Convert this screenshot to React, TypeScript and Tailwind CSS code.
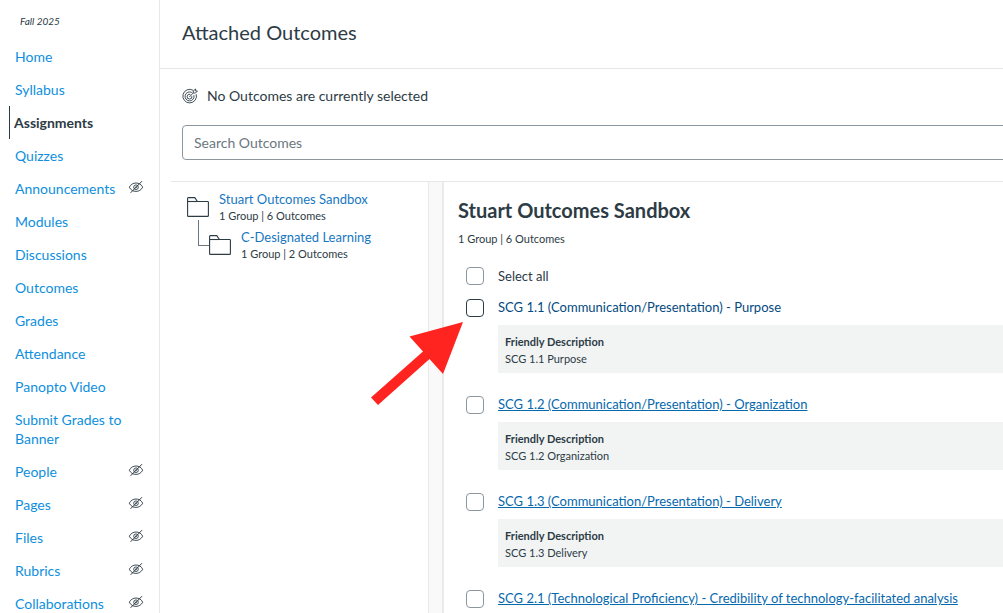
import { useState } from 'react';

interface NavItem {
  label: string;
  hidden?: boolean;
}

interface Outcome {
  title: string;
  description?: string;
}

const NAV_ITEMS: NavItem[] = [
  { label: 'Home' },
  { label: 'Syllabus' },
  { label: 'Assignments' },
  { label: 'Quizzes' },
  { label: 'Announcements', hidden: true },
  { label: 'Modules' },
  { label: 'Discussions' },
  { label: 'Outcomes' },
  { label: 'Grades' },
  { label: 'Attendance' },
  { label: 'Panopto Video' },
  { label: 'Submit Grades to Banner' },
  { label: 'People', hidden: true },
  { label: 'Pages', hidden: true },
  { label: 'Files', hidden: true },
  { label: 'Rubrics', hidden: true },
  { label: 'Collaborations', hidden: true },
];

const OUTCOMES: Outcome[] = [
  { title: 'SCG 1.1 (Communication/Presentation) - Purpose', description: 'SCG 1.1 Purpose' },
  { title: 'SCG 1.2 (Communication/Presentation) - Organization', description: 'SCG 1.2 Organization' },
  { title: 'SCG 1.3 (Communication/Presentation) - Delivery', description: 'SCG 1.3 Delivery' },
  { title: 'SCG 2.1 (Technological Proficiency) - Credibility of technology-facilitated analysis' },
];

const HiddenIcon = () => (
  <svg width="16" height="14" viewBox="0 0 16 14" fill="none" stroke="#2d3b45" className="shrink-0">
    <path d="M1.3 7.2C2.8 4.4 5.2 3 8 3s5.2 1.2 6.7 4.2C13.2 10 10.8 11.4 8 11.4S2.8 10.2 1.3 7.2Z" strokeWidth="0.9" />
    <circle cx="8" cy="7.2" r="2.3" strokeWidth="0.9" />
    <circle cx="8" cy="7.2" r="0.8" fill="#2d3b45" stroke="none" />
    <path d="M2.6 12.8 14 1.2" strokeWidth="1" />
  </svg>
);

const TargetIcon = () => (
  <svg width="16" height="16" viewBox="0 0 16 16" fill="none" stroke="#2d3b45" className="shrink-0">
    <path d="M11.2 2.3A6.8 6.8 0 1 0 14.2 6.2" strokeWidth="0.9" />
    <path d="M9.8 4.5A4.5 4.5 0 1 0 11.9 7.2" strokeWidth="0.9" />
    <path d="M8.4 6.4A2.4 2.4 0 1 0 9.9 8.2" strokeWidth="0.9" />
    <path d="M7.4 9 11.2 5M11.2 5V3L13.6 1V3H15.4L13.4 5Z" strokeWidth="0.9" />
  </svg>
);

const FolderIcon = () => (
  <svg width="22" height="20" viewBox="0 0 22 20" fill="none" stroke="#2d3b45" className="shrink-0">
    <path d="M.6 18.4V1.3Q.6.6 1.3.6H7.8L10.4 4.5H20.6Q21.4 4.500 21.4 5.3V18.4Q21.4 19.4 20.6 19.4H1.4Q.6 19.4.6 18.4Z" strokeWidth="1.1" />
    <path d="M.6 4.5H10.4" strokeWidth="1.1" />
  </svg>
);

export default function App() {
  const [checked, setChecked] = useState<boolean[]>(OUTCOMES.map(() => false));
  const allChecked = checked.every(Boolean);

  const toggle = (index: number) => setChecked((prev) => prev.map((v, i) => (i === index ? !v : v)));

  return (
    <div className="flex h-screen overflow-hidden bg-white font-['Lato',sans-serif] text-[#2d3b45]">
      <nav className="w-40 shrink-0 border-r border-[#e5e7e8]">
        <p className="pt-3 pl-5 h-10 text-[10px] leading-[18px] italic">Fall 2025</p>
        <ul>
          {NAV_ITEMS.map(({ label, hidden }) => {
            const active = label === 'Assignments';
            return (
              <li key={label} className="flex items-start justify-between pl-[9px] pr-[15px]">
                <a
                  href="#"
                  aria-current={active ? 'page' : undefined}
                  className={`py-[7px] text-[14px] leading-[19px] ${
                    active ? 'border-l border-[#2d3b45] pl-1 font-bold' : 'pl-[6px] text-[#0e8fdd]'
                  }`}
                >
                  {label}
                </a>
                {hidden && <span className="pt-2"><HiddenIcon /></span>}
              </li>
            );
          })}
        </ul>
      </nav>

      <main className="flex min-w-0 flex-1 flex-col">
        <header className="shrink-0 border-b border-[#e5e7e8] px-[22px] pt-5 pb-6">
          <h1 className="text-[20px] leading-6">Attached Outcomes</h1>
        </header>

        <div className="shrink-0 pt-[18px] pl-[22px]">
          <p className="flex items-center gap-[9px] text-[14px] leading-[18px]">
            <TargetIcon />
            No Outcomes are currently selected
          </p>
          {/* field runs on past the edge of the tray */}
          <div className="-mr-2 pt-5">
            <input
              type="search"
              aria-label="Search Outcomes"
              placeholder="Search Outcomes"
              className="block h-[35px] w-full rounded border border-[#8b969e] px-[11px] text-[14px] placeholder:text-[#6b7780]"
            />
          </div>
        </div>

        <div className="mt-[21px] ml-[11px] flex min-h-0 flex-1 border-t border-[#e5e7e8]">
          <aside className="w-[257px] shrink-0 pt-2 pl-4">
            <div className="flex gap-[10px]">
              <span className="pt-[7px]"><FolderIcon /></span>
              <div>
                <a href="#" className="block text-[13px] leading-[18px] text-[#1777c2]">Stuart Outcomes Sandbox</a>
                <p className="text-[11px] leading-4">1 Group | 6 Outcomes</p>
              </div>
            </div>
            <div className="flex pt-1 pl-[11px]">
              <span className="-mt-2 h-[26px] w-[11px] border-b border-l border-[#6b7780]" />
              <div className="flex gap-[10px]">
                <span className="pt-[7px]"><FolderIcon /></span>
                <div>
                  <a href="#" className="block text-[13px] leading-[18px] text-[#1777c2]">C-Designated Learning</a>
                  <p className="text-[11px] leading-4">1 Group | 2 Outcomes</p>
                </div>
              </div>
            </div>
          </aside>

          <div className="w-4 shrink-0 border-r-2 border-l border-[#e8eaeb] bg-[#f9f9f9]" />

          <section className="min-w-0 flex-1 pt-4 pl-[14px]">
            <h2 className="text-[20px] leading-6 font-bold">Stuart Outcomes Sandbox</h2>
            <p className="pt-[9px] text-[11px] leading-4">1 Group | 6 Outcomes</p>

            <label className="mt-5 flex items-center gap-[14px] pl-2 text-[13px] leading-[18px]">
              <input
                type="checkbox"
                checked={allChecked}
                onChange={() => setChecked(OUTCOMES.map(() => !allChecked))}
                className="size-[18px] shrink-0 appearance-none rounded border border-[#8b969e] bg-white checked:bg-[#2d3b45]"
              />
              Select all
            </label>

            <ul className="flex flex-col gap-[23px] pt-[14px] pl-2">
              {OUTCOMES.map((outcome, i) => (
                <li key={outcome.title} className="flex items-start gap-[14px]">
                  <input
                    type="checkbox"
                    aria-label={outcome.title}
                    checked={checked[i]}
                    onChange={() => toggle(i)}
                    className={`size-[18px] shrink-0 appearance-none rounded border bg-white checked:bg-[#2d3b45] ${
                      i === 0 ? 'border-[#2d3b45]' : 'border-[#8b969e]'
                    }`}
                  />
                  <div className="min-w-0 flex-1">
                    <a
                      href="#"
                      className={`block text-[13px] leading-4 ${
                        i === 0 ? 'text-[#034a80]' : 'text-[#0668ad] underline'
                      }`}
                    >
                      {outcome.title}
                    </a>
                    {outcome.description && (
                      <div className="mt-[10px] bg-[#f2f4f4] pt-2 pb-[6px] pl-[7px] text-[11px] leading-[17px]">
                        <p className="font-bold">Friendly Description</p>
                        <p>{outcome.description}</p>
                      </div>
                    )}
                  </div>
                </li>
              ))}
            </ul>
          </section>
        </div>
      </main>

      {/* arrow pointing at the first outcome's checkbox */}
      <svg
        width="94"
        height="86"
        viewBox="0 0 94 86"
        aria-hidden="true"
        className="pointer-events-none absolute top-[320px] left-[370px]"
      >
        <path d="M93 2 39.5 16.5 53 31.5 1 77.5 8 85 59.5 39 73 54Z" fill="#ff2420" />
      </svg>
    </div>
  );
}
